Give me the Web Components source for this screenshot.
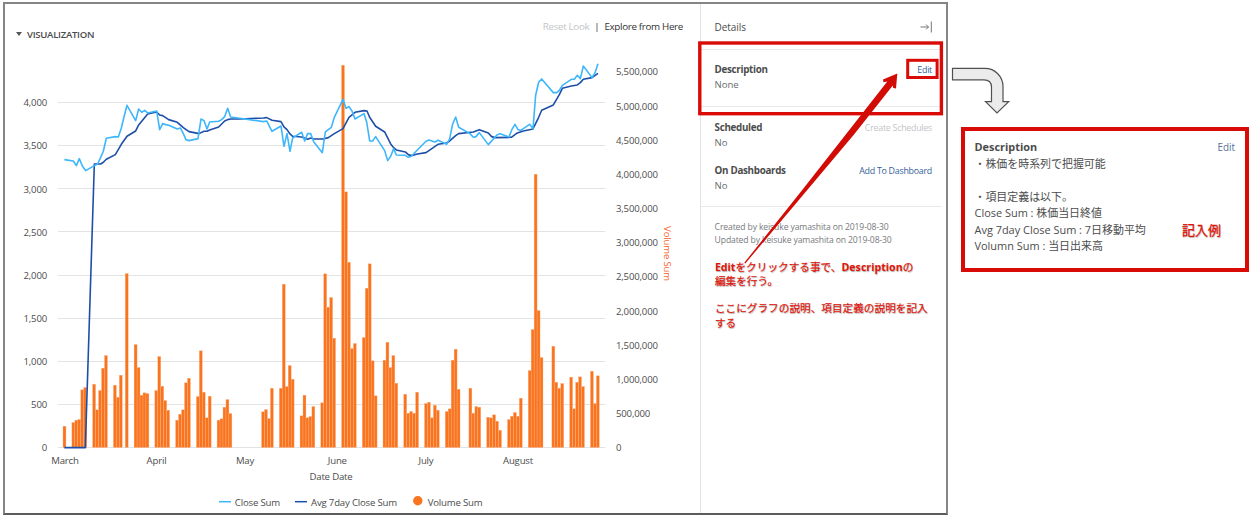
<!DOCTYPE html>
<html lang="ja">
<head>
<meta charset="utf-8">
<title>Looker</title>
<style>
body {
    margin: 0;
    width: 1253px;
    height: 524px;
    overflow: hidden;
    background: #fff;
    color: #4c4c4c;
    font-family: "Open Sans", "Noto Sans CJK JP", sans-serif;
    font-size: 10px;
}
</style>
</head>
<body>
<look-page>
    <look-frame slot="main">
        <look-chart slot="chart"></look-chart>
        <look-details slot="details">
            <detail-group class="first">
                <detail-item label="Description" action="Edit">None</detail-item>
            </detail-group>
            <detail-group class="second">
                <detail-item label="Scheduled" action="Create Schedules" disabled>No</detail-item>
                <detail-item label="On Dashboards" action="Add To Dashboard">No</detail-item>
            </detail-group>
        </look-details>
    </look-frame>
    <look-example slot="example"></look-example>
    <look-arrows slot="over"></look-arrows>
</look-page>

<script>
class LookPage extends HTMLElement {
    constructor() {
        super();
        this._root = this.attachShadow({ mode: 'open' });
        this._root.innerHTML = `
        <style>
        :host {
            display: flex;
            position: relative;
            width: 1253px;
            height: 524px;
            box-sizing: border-box;
            padding: 2px 4px 0 3px;
            justify-content: space-between;
            align-items: flex-start;
        }
        </style>
        <slot name="main"></slot>
        <slot name="example"></slot>
        <slot name="over"></slot>
        `;
    }
}
window.customElements.define('look-page', LookPage);

class LookFrame extends HTMLElement {
    constructor() {
        super();
        this._root = this.attachShadow({ mode: 'open' });
        this._root.innerHTML = `
        <style>
        :host {
            display: flex;
            width: 945px;
            height: 513px;
            box-sizing: border-box;
            border: 2px solid #858585;
            border-bottom-color: #5c5c5e;
        }
        section {
            width: 695px;
            border-right: 1px solid #e2e3e4;
        }
        header {
            display: flex;
            justify-content: space-between;
            height: 46px;
        }
        h2 {
            display: flex;
            align-items: center;
            gap: 5px;
            margin: 22px 0 0 11px;
            height: 16px;
            font-size: 9.6px;
            font-weight: 600;
            letter-spacing: -0.3px;
        }
        h2 svg { width: 6px; height: 4px; }
        nav {
            display: flex;
            gap: 5px;
            margin: 15px 17px 0 0;
            height: 16px;
            line-height: 16px;
            font-size: 9.8px;
            letter-spacing: -0.32px;
            color: #333;
        }
        .off { color: #c3c5c7; }
        </style>
        <section>
            <header>
                <h2><svg viewBox="0 0 6 4"><path d="M0 0h6L3 4z" fill="#555"/></svg>VISUALIZATION</h2>
                <nav><span class="off">Reset Look</span><span>|</span><span>Explore from Here</span></nav>
            </header>
            <slot name="chart"></slot>
        </section>
        <slot name="details"></slot>
        `;
    }
}
window.customElements.define('look-frame', LookFrame);

class LookChart extends HTMLElement {
    constructor() {
        super();
        this._root = this.attachShadow({ mode: 'open' });

        // DATA
        // one row per week: first day, then the height of each bar (3 units = 1px)
        this._volume = [
            [0, 64],
            [3, 75, 82, 84, 173, 180],
            [10, 190, 113, 171, 238, 276],
            [17, 187, 151, 217],
            [21, 522],
            [24, 309, 240, 157, 164, 162],
            [31, 171, 273, 184, 141, 112],
            [38, 82, 100, 113, 194, 208],
            [45, 153, 290, 166, 89, 154],
            [52, 82, 86, 121, 144, 102],
            [67, 107, 114, 87, 178],
            [73, 178, 490, 183, 246, 205],
            [80, 95, 157, 89, 93, 123],
            [87, 134, 521, 421, 450, 328],
            [94, 1147, 767, 556, 297, 312],
            [101, 330, 478, 551, 260, 155],
            [108, 262, 316, 240, 276, 193],
            [115, 160, 103, 108, 103, 166],
            [122, 132, 136, 89, 127, 112],
            [129, 108, 116, 262, 295, 175],
            [137, 178, 103, 123, 121],
            [143, 91, 89, 98, 79, 52],
            [150, 84, 94, 105, 94, 148],
            [157, 231, 354, 820, 411, 270],
            [165, 304, 196, 178, 192],
            [171, 211, 116, 196, 212, 183],
            [178, 229, 132, 215]
        ];
        this._close = '193,478 220,482 229,496 238,475 247,497 257,511 283,496 293,491 302,471 310,453 319,414 346,409 355,410 364,383 372,350 381,315 407,361 416,326 425,336 434,330 443,338 470,332 479,388 488,370 497,373 506,375 532,386 541,383 550,400 558,418 567,421 594,415 603,356 612,361 621,386 629,365 656,363 665,358 674,349 683,324 692,350 720,354 790,364 800,362 816,393 843,377 852,438 861,400 870,453 878,413 905,396 914,422 923,400 932,400 941,424 967,457 976,395 994,381 1003,351 1029,297 1038,324 1047,319 1056,332 1065,356 1092,340 1100,365 1109,422 1118,422 1127,409 1154,451 1163,481 1172,468 1181,445 1189,464 1216,465 1225,471 1234,468 1252,449 1278,423 1287,419 1305,425 1314,420 1340,432 1349,416 1358,371 1367,350 1376,381 1410,400 1420,411 1428,409 1438,397 1465,433 1491,404 1500,400 1527,410 1536,387 1545,372 1554,388 1562,390 1589,372 1599,385 1607,285 1616,246 1625,236 1660,277 1670,277 1678,270 1687,255 1714,237 1723,237 1732,225 1741,235 1750,197 1776,232 1785,217 1794,190';
        this._average = '193,1342 256,1342 283,491 302,491 310,486 319,477 346,463 364,432 381,408 407,392 416,374 443,341 470,335 479,344 488,346 506,358 532,366 550,382 567,394 597,400 612,393 621,393 629,389 656,380 674,362 683,358 692,356 720,356 790,353 800,352 816,360 843,364 852,380 861,388 870,401 878,408 905,410 923,417 932,413 941,416 970,416 985,412 1003,400 1029,385 1047,351 1065,336 1092,331 1101,332 1109,351 1127,378 1154,395 1172,431 1181,442 1189,449 1216,455 1225,463 1234,466 1252,461 1278,457 1314,432 1340,428 1349,422 1367,406 1376,400 1420,395 1438,388 1465,398 1475,409 1485,412 1534,411 1550,399 1570,392 1599,386 1616,351 1625,330 1660,314 1678,283 1687,264 1714,257 1732,254 1741,247 1750,237 1776,232 1794,219';
        this._months = [['March', 65], ['April', 156.5], ['May', 245], ['June', 337.3], ['July', 426], ['August', 518]];
    }
    connectedCallback() {
        this._root.innerHTML = `
        <style>
        :host { display: block; height: 463px; }
        svg { display: block; }
        text { font-size: 9.6px; letter-spacing: -0.18px; fill: #4c4c4c; }
        .grid { stroke: #e2e3e4; stroke-width: 1; }
        .bars rect { fill: #f9741f; stroke: #ffb688; stroke-width: 0.35; }
        polyline { fill: none; stroke-width: 4.8; stroke-linejoin: round; }
        .close { stroke: #3eb6fb; }
        .average { stroke: #1e4fa8; }
        .end { text-anchor: end; }
        .middle { text-anchor: middle; }
        text.title { fill: #fb6530; }
        </style>
        <svg width="695" height="463" viewBox="5 50 695 463">
            ${this.grid()}
            <g class="bars">${this.bars()}</g>
            <g transform="translate(0 0.3) scale(0.33333)">
                <polyline class="average" points="${this._average}"/>
                <polyline class="close" points="${this._close}"/>
            </g>
            ${this.labels()}
            <text class="middle title" transform="translate(664 253.5) rotate(90)">Volume Sum</text>
            <text class="middle" x="331" y="479.7">Date Date</text>
            <path d="M219 501.7h12" stroke="#3eb6fb" stroke-width="1.5"/>
            <text x="234.8" y="505.5">Close Sum</text>
            <path d="M295 501.7h12" stroke="#1e4fa8" stroke-width="1.5"/>
            <text x="311" y="505.5">Avg 7day Close Sum</text>
            <circle cx="417.8" cy="500.8" r="4.7" fill="#f9741f"/>
            <text x="427.7" y="505.5">Volume Sum</text>
        </svg>
        `;
    }
    grid() {
        let out = '';
        for (let i = 0; i <= 8; i++) {
            const y = Math.round(447 - i * 43.12) + 0.5;
            out += `<path class="grid" d="M58 ${y}H605"/>`;
        }
        return out;
    }
    bars() {
        return this._volume.map(([day, ...heights]) => heights.map((h, i) => {
            const x = 63 + (day + i) * 2.963;
            return `<rect x="${x.toFixed(2)}" y="${(447.5 - h / 3).toFixed(2)}" width="2.96" height="${(h / 3).toFixed(2)}"/>`;
        }).join('')).join('');
    }
    labels() {
        let out = '';
        for (let i = 0; i <= 8; i++) {
            out += `<text class="end" x="47" y="${451.3 - i * 43.12}">${(i * 500).toLocaleString('en-US')}</text>`;
        }
        for (let i = 0; i <= 11; i++) {
            out += `<text x="616" y="${451.3 - i * 34.17}">${(i * 500000).toLocaleString('en-US')}</text>`;
        }
        this._months.forEach(([name, x]) => {
            out += `<text class="middle" x="${x}" y="463.7">${name}</text>`;
        });
        return out;
    }
}
window.customElements.define('look-chart', LookChart);

class LookDetails extends HTMLElement {
    constructor() {
        super();
        this._root = this.attachShadow({ mode: 'open' });
        this._root.innerHTML = `
        <style>
        :host { display: block; width: 241px; }
        header {
            display: flex;
            justify-content: space-between;
            align-items: center;
            height: 46px;
            box-sizing: border-box;
            padding: 1px 10px 0 13.6px;
            font-size: 10px;
            letter-spacing: -0.08px;
            border-bottom: 1px solid #e8e9ea;
        }
        header svg { width: 12px; height: 12px; }
        .meta {
            padding: 14px 0 0 13.6px;
            font-size: 8.6px;
            line-height: 12.5px;
            letter-spacing: -0.12px;
            color: #77797c;
        }
        .note {
            margin: 14px 0 0 13.9px;
            font-size: 10.65px;
            line-height: 14.2px;
            color: #e0160c;
            -webkit-text-stroke: 0.2px #e0160c;
            text-shadow: 0.5px 1px 1px #aaa;
            white-space: nowrap;
        }
        .note p { margin: 0 0 13px; }
        .note b { -webkit-text-stroke: 0; }
        </style>
        <header>
            <span>Details</span>
            <svg viewBox="0 0 12 12" fill="none" stroke="#666" stroke-width="0.9"><path d="M0.5 6h8M6 3.5L8.5 6L6 8.5M11.3 0.5v11"/></svg>
        </header>
        <slot></slot>
        <div class="meta">Created by keisuke yamashita on 2019-08-30<br>Updated by keisuke yamashita on 2019-08-30</div>
        <div class="note">
            <p><b>Edit</b>をクリックする事で、<b>Description</b>の<br>編集を行う。</p>
            <p>ここにグラフの説明、項目定義の説明を記入<br>する</p>
        </div>
        `;
    }
}
window.customElements.define('look-details', LookDetails);

class DetailGroup extends HTMLElement {
    constructor() {
        super();
        this._root = this.attachShadow({ mode: 'open' });
        this._root.innerHTML = `
        <style>
        :host {
            display: flex;
            flex-direction: column;
            gap: 14px;
            box-sizing: border-box;
            padding: 13px 10px 0 13.6px;
            border-bottom: 1px solid #e8e9ea;
        }
        :host(.first) { height: 57px; }
        :host(.second) { height: 100px; padding-top: 14px; }
        </style>
        <slot></slot>
        `;
    }
}
window.customElements.define('detail-group', DetailGroup);

class DetailItem extends HTMLElement {
    constructor() {
        super();
        this._root = this.attachShadow({ mode: 'open' });
    }
    connectedCallback() {
        this._root.innerHTML = `
        <style>
        :host { display: block; font-size: 9.6px; line-height: 14.5px; }
        div { display: flex; justify-content: space-between; }
        b { font-size: 9.8px; letter-spacing: -0.3px; }
        a { color: #355f99; font-size: 8.9px; letter-spacing: -0.27px; }
        :host([disabled]) a { color: #c3c5c7; }
        p { margin: 0; color: #6a6c6e; letter-spacing: -0.1px; }
        </style>
        <div><b>${this.getAttribute('label')}</b><a>${this.getAttribute('action')}</a></div>
        <p><slot></slot></p>
        `;
    }
}
window.customElements.define('detail-item', DetailItem);

class LookExample extends HTMLElement {
    constructor() {
        super();
        this._root = this.attachShadow({ mode: 'open' });
        this._root.innerHTML = `
        <style>
        :host {
            display: block;
            width: 288px;
            height: 145px;
            box-sizing: border-box;
            margin-top: 125px;
            padding: 8px 10px 0 9.5px;
            border: 4px solid #d90b06;
            font-size: 10.95px;
            line-height: 16.55px;
        }
        div { display: flex; justify-content: space-between; }
        a { color: #56709a; font-size: 9.9px; }
        b { font-size: 10.9px; }
        p { margin: 0; white-space: nowrap; }
        .mark {
            font-size: 13px;
            color: #e0160c;
            margin-right: 14px;
            -webkit-text-stroke: 0.3px #e0160c;
            text-shadow: 0.5px 1px 1px #aaa;
        }
        </style>
        <div><b>Description</b><a>Edit</a></div>
        <p>・株価を時系列で把握可能</p>
        <p>&nbsp;</p>
        <p>・項目定義は以下。</p>
        <p>Close Sum : 株価当日終値</p>
        <div><p>Avg 7day Close Sum : 7日移動平均</p><span class="mark">記入例</span></div>
        <p>Volumn Sum : 当日出来高</p>
        `;
    }
}
window.customElements.define('look-example', LookExample);

// red boxes and arrows drawn over the page
class LookArrows extends HTMLElement {
    constructor() {
        super();
        this._root = this.attachShadow({ mode: 'open' });
        this._root.innerHTML = `
        <style>
        :host { position: absolute; left: 0; top: 0; pointer-events: none; }
        svg { display: block; }
        </style>
        <svg width="1253" height="524" viewBox="0 0 1253 524">
            <g fill="none" stroke="#d90b06">
                <rect x="699.8" y="43" width="241.6" height="70.7" stroke-width="3.4"/>
                <rect x="907.7" y="60.3" width="29.4" height="17.2" stroke-width="3"/>
            </g>
            <path d="M744.3 262.8L803 189L848.5 131L887.3 81.5L883.5 82.2L883 79.6L897.3 73.5L896 88.5L893.2 88L892.8 85.5L854 134.5L806 191.5L745.3 263.5z" fill="#d20b05"/>
            <path d="M952.5 68.4H985A18 18 0 0 1 1003 86.5V101.6H1008.7L997 113L985.5 101.6H991.5V87Q991.5 79.8 984 79.8H952.5z" fill="#ebebeb" stroke="#505050" stroke-width="1.2"/>
        </svg>
        `;
    }
}
window.customElements.define('look-arrows', LookArrows);
</script>
</body>
</html>
